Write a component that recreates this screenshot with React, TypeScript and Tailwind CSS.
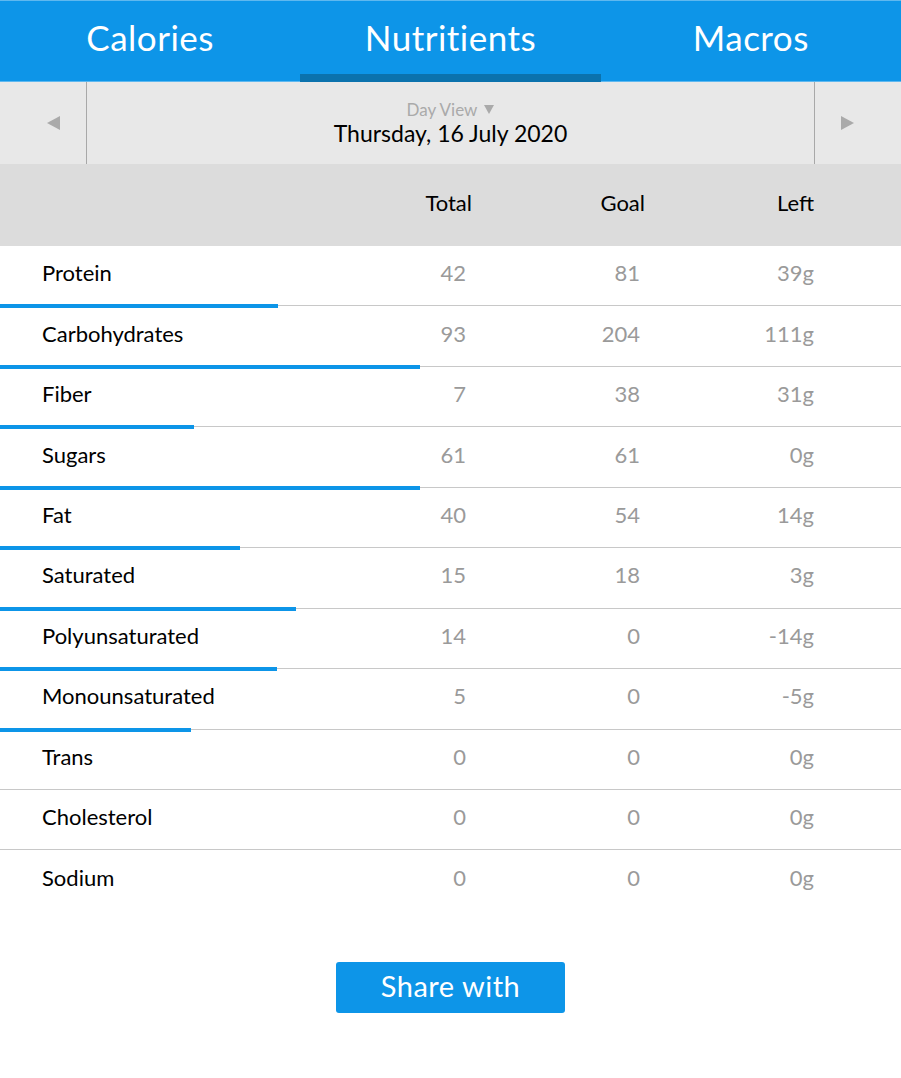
import React from "react";

type Row = { name: string; total: string; goal: string; left: string; bar: number };

const rows: Row[] = [
  { name: "Protein", total: "42", goal: "81", left: "39g", bar: 278 },
  { name: "Carbohydrates", total: "93", goal: "204", left: "111g", bar: 420 },
  { name: "Fiber", total: "7", goal: "38", left: "31g", bar: 194 },
  { name: "Sugars", total: "61", goal: "61", left: "0g", bar: 420 },
  { name: "Fat", total: "40", goal: "54", left: "14g", bar: 240 },
  { name: "Saturated", total: "15", goal: "18", left: "3g", bar: 296 },
  { name: "Polyunsaturated", total: "14", goal: "0", left: "-14g", bar: 277 },
  { name: "Monounsaturated", total: "5", goal: "0", left: "-5g", bar: 191 },
  { name: "Trans", total: "0", goal: "0", left: "0g", bar: 0 },
  { name: "Cholesterol", total: "0", goal: "0", left: "0g", bar: 0 },
  { name: "Sodium", total: "0", goal: "0", left: "0g", bar: 0 },
];

const tabs = ["Calories", "Nutritients", "Macros"];

export default function App() {
  return (
    <div className="w-[901px] h-[1078px] bg-white font-['Lato','Noto_Sans',sans-serif]">
      {/* tabs */}
      <div className="h-[82px] bg-[#0d95e8] border-t border-[#5fb8ef] border-b border-b-[#5fb8ef] grid grid-cols-3">
        {tabs.map((t, i) => (
          <div key={t} className="relative flex items-center justify-center pb-[8px]">
            <span className="text-white text-[35px] tracking-[0.5px]">{t}</span>
            {i === 1 && (
              <div className="absolute left-0 right-0 bottom-[-1px] h-[8px] bg-[#0b72ad]" />
            )}
          </div>
        ))}
      </div>

      {/* date nav */}
      <div className="h-[82px] bg-[#e8e8e8] flex">
        <div className="w-[87px] border-r border-[#a8a8a8] flex items-center justify-end pr-[26px]">
          <svg width="13" height="14" viewBox="0 0 13 14">
            <polygon points="13,0 13,14 0,7" fill="#aaaaaa" />
          </svg>
        </div>
        <div className="flex-1 flex flex-col items-center justify-center">
          <div className="text-[17px] leading-[19px] text-[#aaaaaa] flex items-center gap-[7px]">
            Day View
            <svg width="10" height="9" viewBox="0 0 10 9">
              <polygon points="0,0 10,0 5,9" fill="#aaaaaa" />
            </svg>
          </div>
          <div className="text-[23px] leading-[28px] text-black">Thursday, 16 July 2020</div>
        </div>
        <div className="w-[87px] border-l border-[#a8a8a8] flex items-center justify-start pl-[26px]">
          <svg width="13" height="14" viewBox="0 0 13 14">
            <polygon points="0,0 0,14 13,7" fill="#aaaaaa" />
          </svg>
        </div>
      </div>

      {/* header */}
      <div className="h-[82px] bg-[#dcdcdc] flex items-center text-[22px] text-black pb-[6px]">
        <div className="w-[365px]" />
        <div className="w-[107px] text-right">Total</div>
        <div className="w-[173px] text-right">Goal</div>
        <div className="w-[169px] text-right">Left</div>
      </div>

      {/* rows */}
      <div>
        {rows.map((r, i) => (
          <div
            key={r.name}
            className={`relative h-[60.45px] flex items-center text-[22px] ${
              i < rows.length - 1 ? "border-b border-[#c8c8c8]" : ""
            }`}
          >
            <div className="flex items-center -translate-y-[3px]">
              <div className="w-[365px] pl-[42px] text-black">{r.name}</div>
              <div className="w-[101px] text-right text-[#9a9a9a]">{r.total}</div>
              <div className="w-[174px] text-right text-[#9a9a9a]">{r.goal}</div>
              <div className="w-[174px] text-right text-[#9a9a9a]">{r.left}</div>
            </div>
            {r.bar > 0 && (
              <div
                className="absolute left-0 bottom-[-3px] h-[4px] bg-[#0d95e8]"
                style={{ width: r.bar }}
              />
            )}
          </div>
        ))}
      </div>

      {/* share */}
      <div className="flex justify-center pt-[51px]">
        <button className="w-[229px] h-[51px] rounded-[3px] bg-[#0d95e8] text-white text-[29px] tracking-[0.5px] pb-[4px]">
          Share with
        </button>
      </div>
    </div>
  );
}
